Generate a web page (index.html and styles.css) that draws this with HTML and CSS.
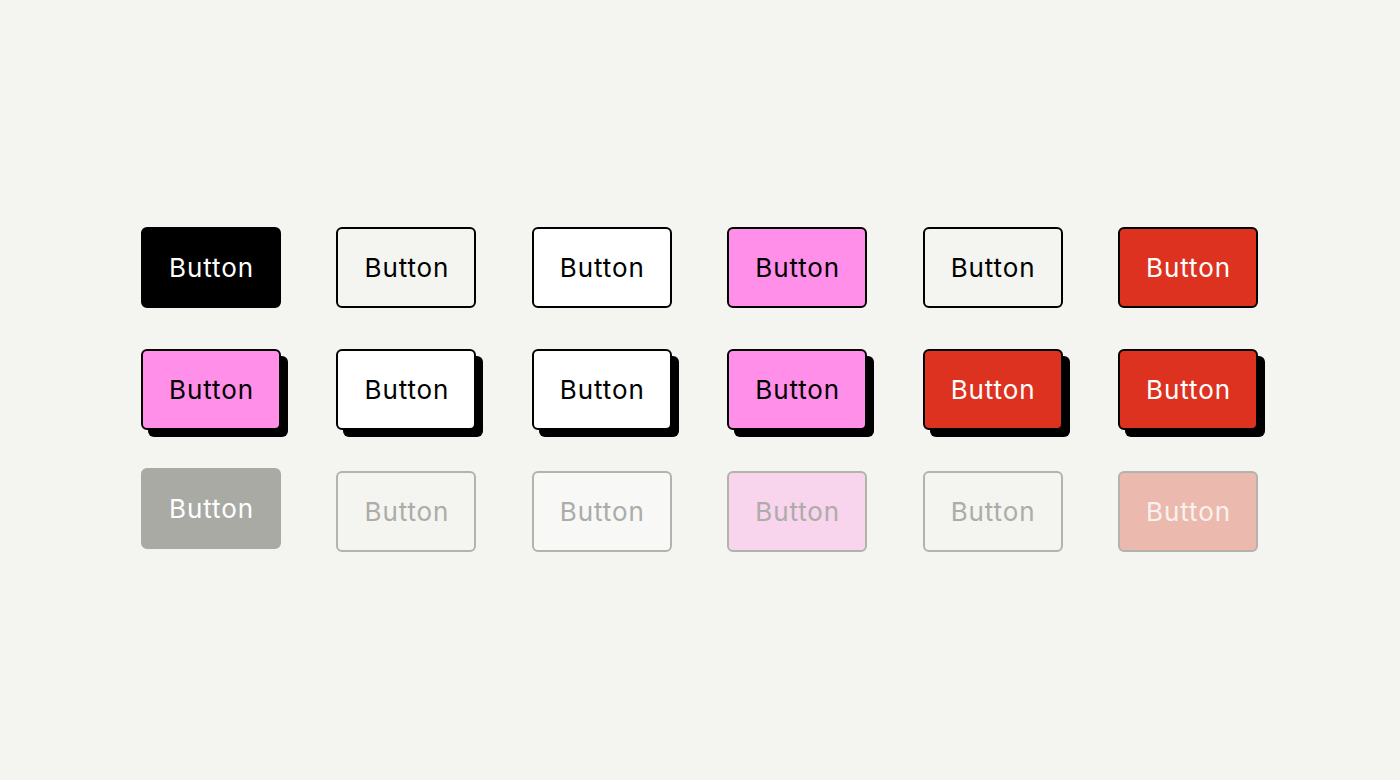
FILE: index.html
```html
<!DOCTYPE html>
<html>
<head>
<meta charset="utf-8">
<link rel="stylesheet" href="styles.css">
</head>
<body>
<main class="page">
  <div class="grid">
    <button class="btn btn-black">Button</button>
    <button class="btn btn-outline">Button</button>
    <button class="btn btn-white">Button</button>
    <button class="btn btn-pink">Button</button>
    <button class="btn btn-outline">Button</button>
    <button class="btn btn-red">Button</button>

    <button class="btn btn-pink raised">Button</button>
    <button class="btn btn-white raised">Button</button>
    <button class="btn btn-white raised">Button</button>
    <button class="btn btn-pink raised">Button</button>
    <button class="btn btn-red raised">Button</button>
    <button class="btn btn-red raised">Button</button>

    <button class="btn btn-dis-solid">Button</button>
    <button class="btn btn-dis btn-dis-outline">Button</button>
    <button class="btn btn-dis btn-dis-white">Button</button>
    <button class="btn btn-dis btn-dis-pink">Button</button>
    <button class="btn btn-dis btn-dis-outline">Button</button>
    <button class="btn btn-dis btn-dis-red">Button</button>
  </div>
</main>
</body>
</html>
```

FILE: styles.css
```css
html, body {
  margin: 0;
  padding: 0;
  background: #f4f4f0;
}
.page {
  width: 1400px;
  height: 780px;
  display: flex;
  align-items: center;
  justify-content: center;
}
.grid {
  display: grid;
  grid-template-columns: repeat(6, 140px);
  column-gap: 55.4px;
  row-gap: 41px;
  margin-top: -1px;
  margin-right: 1px;
}
.btn {
  box-sizing: border-box;
  width: 140px;
  height: 81px;
  border-radius: 6px;
  border: 2px solid #000;
  font-family: Inter, "Noto Sans", sans-serif;
  font-size: 26px;
  letter-spacing: 0.9px;
  font-weight: 400;
  color: #000;
  padding: 0 0 0 1px;
  margin: 0;
  display: flex;
  align-items: center;
  justify-content: center;
  cursor: pointer;
}
.btn-black { background: #000; color: #fff; }
.btn-outline { background: #f4f4f0; }
.btn-white { background: #fff; }
.btn-pink { background: #ff8fe8; }
.btn-red { background: #dd3220; color: #fff; }
.raised { box-shadow: 7px 7px 0 #000; }

.btn-dis-solid {
  background: #aaaaa5;
  border-color: #aaaaa5;
  color: #fff;
  margin-top: -3px;
  margin-bottom: 3px;
}
.btn-dis { border-color: #b3b3ae; color: #acaca8; }
.btn-dis-outline { background: #f4f4f0; }
.btn-dis-white { background: #f8f8f6; }
.btn-dis-pink { background: #f8d4ed; }
.btn-dis-red { background: #ecb9af; color: #f8f2ee; }
```
